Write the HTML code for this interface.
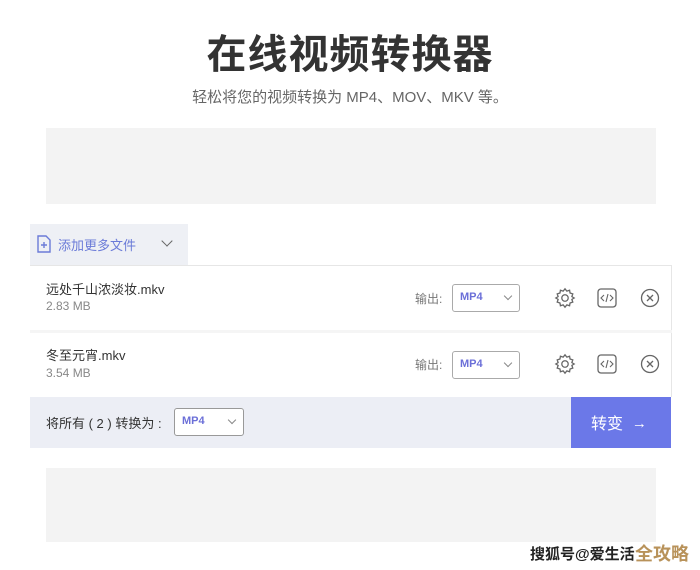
<!DOCTYPE html>
<html><head><meta charset="utf-8"><style>
body{margin:0;width:700px;height:570px;background:#fff;font-family:"Liberation Sans","Noto Sans CJK SC",sans-serif;position:relative;overflow:hidden}
.a{position:absolute}
.title{left:0;width:700px;top:22px;text-align:center;font-size:40px;font-weight:bold;color:#333;letter-spacing:1px}
.sub{left:0;width:700px;top:86px;text-align:center;font-size:15px;color:#666}
.sel{border:1px solid #aaa;border-radius:3px;background:#fff;width:68px;height:28px;box-sizing:border-box}
.sel span{position:absolute;left:7px;top:6px;font-size:11px;color:#6b6fd8;font-weight:bold}
.sel i{position:absolute;right:8px;top:8px;width:5px;height:5px;border-right:1.3px solid #888;border-bottom:1.3px solid #888;transform:rotate(45deg)}
.fn{font-size:13px;color:#333}
.fs{font-size:12px;color:#888}
.out{font-size:12px;color:#777}
</style></head><body>
<div class="a title">在线视频转换器</div>
<div class="a sub">轻松将您的视频转换为 MP4、MOV、MKV 等。</div>
<div class="a" style="left:46px;top:128px;width:610px;height:76px;background:#f3f3f3;z-index:0"></div>
<div class="a" style="left:46px;top:468px;width:610px;height:74px;background:#f3f3f3;z-index:0"></div>
<div class="a" style="left:30px;top:224px;width:158px;height:42px;background:#eef0f5"></div>
<svg class="a" style="left:36px;top:235px" width="16" height="18" viewBox="0 0 16 18"><path d="M2 1h8l4 4v12H2z" fill="none" stroke="#6b7bd8" stroke-width="1.4"/><path d="M8 7v6M5 10h6" stroke="#6b7bd8" stroke-width="1.4"/></svg>
<div class="a" style="left:58px;top:235px;font-size:13px;color:#6b7bd8">添加更多文件</div>
<div class="a" style="left:163px;top:237px;width:7px;height:7px;border-right:1.5px solid #666;border-bottom:1.5px solid #666;transform:rotate(45deg)"></div>
<div class="a" style="left:30px;top:265px;width:642px;height:1px;background:#e6e6e6"></div>
<div class="a" style="left:671px;top:265px;width:1px;height:132px;background:#e6e6e6"></div>
<div class="a" style="left:30px;top:330px;width:642px;height:3px;background:#f5f5f5"></div>
<div class="a fn" style="left:46px;top:279px">远处千山浓淡妆.mkv</div>
<div class="a fs" style="left:46px;top:299px">2.83 MB</div>
<div class="a fn" style="left:46px;top:345px">冬至元宵.mkv</div>
<div class="a fs" style="left:46px;top:366px">3.54 MB</div>
<div class="a out" style="left:415px;top:290px">输出:</div>
<div class="a sel" style="left:452px;top:284px"><span>MP4</span><i></i></div>
<div class="a out" style="left:415px;top:356px">输出:</div>
<div class="a sel" style="left:452px;top:351px"><span>MP4</span><i></i></div>
<svg class="a" style="left:554px;top:287px" width="22" height="22" viewBox="0 0 24 24"><path d="M12 2l2 2.5 3-1 .5 3 3 1-1 3 2.5 1.5-2.5 1.5 1 3-3 1-.5 3-3-1L12 22l-2-2.5-3 1-.5-3-3-1 1-3L2 12l2.5-1.5-1-3 3-1 .5-3 3 1z" fill="none" stroke="#666" stroke-width="1.4"/><circle cx="12" cy="12" r="3.5" fill="none" stroke="#666" stroke-width="1.4"/></svg>
<svg class="a" style="left:554px;top:353px" width="22" height="22" viewBox="0 0 24 24"><path d="M12 2l2 2.5 3-1 .5 3 3 1-1 3 2.5 1.5-2.5 1.5 1 3-3 1-.5 3-3-1L12 22l-2-2.5-3 1-.5-3-3-1 1-3L2 12l2.5-1.5-1-3 3-1 .5-3 3 1z" fill="none" stroke="#666" stroke-width="1.4"/><circle cx="12" cy="12" r="3.5" fill="none" stroke="#666" stroke-width="1.4"/></svg>
<svg class="a" style="left:597px;top:288px" width="20" height="20" viewBox="0 0 20 20"><rect x="1" y="1" width="18" height="18" rx="3" fill="none" stroke="#666" stroke-width="1.3"/><path d="M7 7l-3 3 3 3M13 7l3 3-3 3M11 6l-2 8" fill="none" stroke="#666" stroke-width="1.1"/></svg>
<svg class="a" style="left:597px;top:354px" width="20" height="20" viewBox="0 0 20 20"><rect x="1" y="1" width="18" height="18" rx="3" fill="none" stroke="#666" stroke-width="1.3"/><path d="M7 7l-3 3 3 3M13 7l3 3-3 3M11 6l-2 8" fill="none" stroke="#666" stroke-width="1.1"/></svg>
<svg class="a" style="left:640px;top:288px" width="20" height="20" viewBox="0 0 20 20"><circle cx="10" cy="10" r="8.5" fill="none" stroke="#666" stroke-width="1.3"/><path d="M7 7l6 6M13 7l-6 6" stroke="#666" stroke-width="1.3"/></svg>
<svg class="a" style="left:640px;top:354px" width="20" height="20" viewBox="0 0 20 20"><circle cx="10" cy="10" r="8.5" fill="none" stroke="#666" stroke-width="1.3"/><path d="M7 7l6 6M13 7l-6 6" stroke="#666" stroke-width="1.3"/></svg>
<div class="a" style="left:30px;top:397px;width:541px;height:51px;background:#eceef5"></div>
<div class="a" style="left:46px;top:413px;font-size:13px;color:#333">将所有 ( 2 ) 转换为 :</div>
<div class="a sel" style="left:174px;top:408px;width:70px;border-color:#999"><span>MP4</span><i></i></div>
<div class="a" style="left:571px;top:397px;width:100px;height:51px;background:#6b78e8"></div>
<div class="a" style="left:591px;top:410px;font-size:16px;color:#fff;white-space:nowrap">转变 &nbsp;<span style="font-size:15px;font-weight:bold;position:relative;top:-1px">→</span></div>
<div class="a" style="left:530px;top:543px;font-size:15px;color:#222;font-weight:bold;white-space:nowrap;text-shadow:0 0 2px #fff">搜狐号@爱生活<span style="color:#b8925a;font-size:18px;position:absolute;left:105px;top:-3px">全攻略</span></div>
</body></html>
